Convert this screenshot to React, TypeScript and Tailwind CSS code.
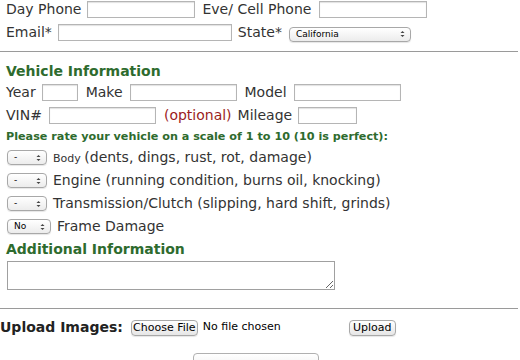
import type { ReactNode } from 'react'

const font = { fontFamily: '"DejaVu Sans", Verdana, sans-serif' }

function TextBox({ w }: { w: string }) {
  return <input type="text" className={`${w} h-[17px] border border-[#b5b5b5] bg-white shadow-[inset_0_1px_1px_rgba(0,0,0,0.12)] outline-none`} />
}

function MacSelect({ value, w }: { value: string; w: string }) {
  return (
    <span
      className={`${w} inline-flex h-[15px] items-center justify-between rounded-[4px] border border-[#a8a8a8] bg-gradient-to-b from-white to-[#ececec] pl-[6px] pr-[5px] text-[9px] leading-none text-black shadow-[0_1px_1px_rgba(0,0,0,0.1)]`}
    >
      <span>{value}</span>
      <svg width="5" height="8" viewBox="0 0 5 8" aria-hidden="true">
        <path d="M0.5 3 L2.5 1 L4.5 3 Z M0.5 5 L2.5 7 L4.5 5 Z" fill="#444" />
      </svg>
    </span>
  )
}

function MacButton({ children, className = '' }: { children: ReactNode; className?: string }) {
  return (
    <span
      className={`inline-flex h-[16px] items-center justify-center rounded-[4px] border border-[#a8a8a8] bg-gradient-to-b from-white to-[#e6e6e6] text-[11px] leading-none text-black shadow-[0_1px_1px_rgba(0,0,0,0.1)] ${className}`}
    >
      {children}
    </span>
  )
}

function RatingRow({ small, rest, value = '-', w = 'w-[40px]' }: { small?: string; rest: string; value?: string; w?: string }) {
  return (
    <div className="flex h-[23px] items-center pl-[7px]">
      <MacSelect value={value} w={w} />
      <span className="ml-[6px] text-[14px] text-[#333]">
        {small && <span className="text-[11px]">{small} </span>}
        {rest}
      </span>
    </div>
  )
}

export default function App() {
  return (
    <div className="h-[360px] w-[520px] overflow-hidden bg-white" style={font}>
      <div className="flex h-[18px] items-center pl-[6px] text-[14px] text-[#333]">
        <span>Day Phone</span>
        <span className="ml-[6px]"><TextBox w="w-[108px]" /></span>
        <span className="ml-[7px]">Eve/ Cell Phone</span>
        <span className="ml-[8px]"><TextBox w="w-[108px]" /></span>
      </div>
      <div className="mt-[5px] flex h-[18px] items-center pl-[6px] text-[14px] text-[#333]">
        <span>Email*</span>
        <span className="ml-[6px]"><TextBox w="w-[174px]" /></span>
        <span className="ml-[6px]">State*</span>
        <span className="ml-[7px]"><MacSelect value="California" w="w-[122px]" /></span>
      </div>

      <div className="mt-[10px] h-px w-[518px] bg-[#9a9a9a]" />

      <div className="mt-[10px] pl-[6px] text-[14px] font-bold leading-[18px] text-[#2e6b2e]">Vehicle Information</div>
      <div className="mt-[1px] flex h-[22px] items-center pl-[6px] text-[14px] text-[#333]">
        <span>Year</span>
        <span className="ml-[6px]"><TextBox w="w-[36px]" /></span>
        <span className="ml-[8px]">Make</span>
        <span className="ml-[7px]"><TextBox w="w-[107px]" /></span>
        <span className="ml-[8px]">Model</span>
        <span className="ml-[7px]"><TextBox w="w-[107px]" /></span>
      </div>
      <div className="mt-[1px] flex h-[22px] items-center pl-[6px] text-[14px] text-[#333]">
        <span>VIN#</span>
        <span className="ml-[7px]"><TextBox w="w-[107px]" /></span>
        <span className="ml-[8px] text-[#9b1c1c]">(optional)</span>
        <span className="ml-[6px]">Mileage</span>
        <span className="ml-[6px]"><TextBox w="w-[59px]" /></span>
      </div>
      <div className="mt-[4px] pl-[6px] text-[11.2px] font-bold leading-[14px] text-[#2e6b2e]">
        Please rate your vehicle on a scale of 1 to 10 (10 is perfect):
      </div>
      <div className="mt-[2px]">
        <RatingRow small="Body" rest="(dents, dings, rust, rot, damage)" />
        <RatingRow rest="Engine (running condition, burns oil, knocking)" />
        <RatingRow rest="Transmission/Clutch (slipping, hard shift, grinds)" />
        <RatingRow value="No" w="w-[44px]" rest=" Frame Damage" />
      </div>
      <div className="mt-[2px] pl-[6px] text-[14px] font-bold leading-[18px] text-[#2e6b2e]">Additional Information</div>
      <div className="mt-[3px] pl-[7px]">
        <textarea className="block h-[29px] w-[328px] resize border border-[#a0a0a0] bg-white outline-none" />
      </div>

      <div className="mt-[18px] h-px w-[518px] bg-[#9a9a9a]" />

      <div className="mt-[10px] flex h-[17px] items-center">
        <span className="text-[14px] font-bold text-[#222]">Upload Images:</span>
        <MacButton className="ml-[8px] w-[67px]">Choose File</MacButton>
        <span className="ml-[5px] text-[11px] text-black">No file chosen</span>
        <MacButton className="ml-[68px] w-[47px]">Upload</MacButton>
      </div>
      <div className="mt-[17px] pl-[193px]">
        <span className="block h-[20px] w-[126px] rounded-[4px] border border-[#b0b0b0] bg-gradient-to-b from-white to-[#ececec]" />
      </div>
    </div>
  )
}
